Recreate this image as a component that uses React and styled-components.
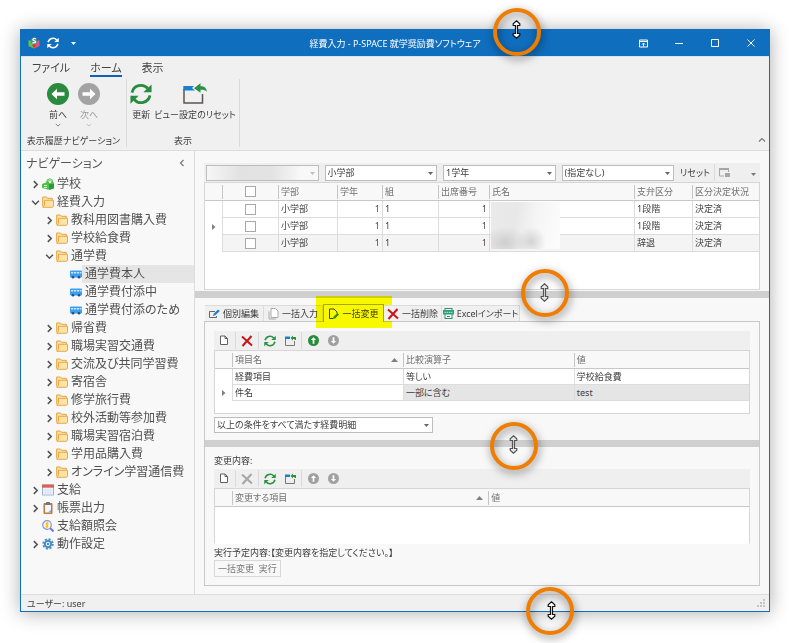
import React from 'react';
import styled, { createGlobalStyle } from 'styled-components';

const GlobalStyle = createGlobalStyle`
  *, *::before, *::after {
    box-sizing: border-box;
  }

  body {
    margin: 0;
    background: #fff;
    color: #3c3c3c;
    font-family: "Noto Sans", "Noto Sans CJK JP", sans-serif;
    font-feature-settings: "palt";
    font-size: 9px;
    line-height: 13px;
  }

  button, select, input {
    font: inherit;
    font-feature-settings: inherit;
    color: inherit;
    margin: 0;
    padding: 0;
    border: 0;
    background: none;
  }
`;

const Window = styled.div`
  position: relative;
  min-width: 740px;
  margin: 29px 19px 32px 20px;
  border: 1px solid #0f6fbe;
  background: #f8f8f8;
  box-shadow: 0 1px 18px rgba(0, 0, 0, 0.32);
`;

const TitleBar = styled.header`
  display: grid;
  grid-template-columns: 1fr auto 1fr;
  align-items: center;
  height: 26px;
  background: #106ebe;
  color: #fff;
`;

const TitleText = styled.h1`
  margin: 0;
  font-size: 9px;
  font-weight: 400;
`;

const QuickAccess = styled.div`
  display: flex;
  align-items: center;
  gap: 7px;
  padding-left: 7px;

  svg {
    display: block;
  }

  svg:last-child {
    margin-left: 5px;
  }
`;

const WindowButtons = styled.div`
  display: flex;
  justify-content: flex-end;
`;

const WindowButton = styled.button`
  display: flex;
  align-items: center;
  justify-content: center;
  width: 36px;
  height: 26px;
`;

const Ribbon = styled.section`
  position: relative;
  background: #f0f0f0;
  border-top: 1px solid #d5e3f3;
  border-bottom: 1px solid #dcdcdc;
`;

const RibbonTabs = styled.div`
  display: flex;
  gap: 20px;
  padding: 2px 0 0 11px;
`;

const RibbonTab = styled.button`
  height: 18px;
  font-size: 11px;
  line-height: 15px;
  color: #444;
  border-bottom: 2px solid ${props => (props.$active ? '#0f63b5' : 'transparent')};
`;

const RibbonGroups = styled.div`
  display: flex;
  padding: 2px 0 3px;
`;

const RibbonGroup = styled.div`
  display: flex;
  flex-direction: column;
  justify-content: space-between;
  align-items: center;
  min-width: ${props => props.$width}px;
  height: 68px;
  border-right: 1px solid #dadada;
`;

const RibbonItems = styled.div`
  display: flex;
  gap: ${props => props.$gap}px;
`;

const RibbonButton = styled.button`
  display: flex;
  flex-direction: column;
  align-items: center;
  min-width: 22px;
  padding-top: 4px;
  color: ${props => (props.disabled ? '#9a9a9a' : '#3c3c3c')};

  span {
    margin-top: 3px;
  }

  svg + span + svg {
    margin-top: 1px;
  }
`;

const CollapseButton = styled.button`
  position: absolute;
  right: 2px;
  bottom: 2px;
  display: flex;
  padding: 4px 1px;
`;

const Body = styled.div`
  display: flex;
`;

const Navigation = styled.nav`
  flex: 0 0 174px;
  border-right: 1px solid #dcdcdc;
`;

const NavHeader = styled.div`
  display: flex;
  align-items: center;
  justify-content: space-between;
  height: 24px;
  padding: 0 8px 0 5px;

  h2 {
    margin: 0;
    font-size: 12px;
    font-weight: 400;
    color: #555;
  }

  button {
    display: flex;
  }
`;

const Tree = styled.ul`
  margin: 0;
  padding: 0;
  list-style: none;
`;

const TreeRow = styled.li`
  display: flex;
  align-items: center;
  height: 18px;
  padding-left: ${props => 7 + props.$level * 14}px;

  > svg {
    flex: none;
  }
`;

const TreeToggle = styled.button`
  display: flex;
  align-items: center;
  justify-content: center;
  flex: none;
  width: 14px;
  height: 18px;
`;

const TreeSpacer = styled.span`
  flex: none;
  width: 14px;
`;

const TreeLink = styled.a`
  flex: 1;
  padding-left: 3px;
  font-size: 12px;
  line-height: 18px;
  white-space: nowrap;
  text-decoration: none;
  color: #505050;
  background: ${props => (props.$selected ? '#e5e5e5' : 'transparent')};
`;

const Content = styled.main`
  flex: 1;
  min-width: 0;
  padding: 12px 0 8px;
`;

const Inset = styled.div`
  padding: 0 9px;
`;

const Splitter = styled.div`
  position: relative;
  height: 7px;
  margin: ${props => props.$top}px 0 7px;
  background: #cfcfcf;
`;

const FilterBar = styled.div`
  display: flex;
  align-items: center;
  gap: 6px;
  height: 19px;
  padding-left: 2px;
  background: #efefef;
`;

const SelectBox = styled.div`
  position: relative;
  display: flex;
  flex: ${props => (props.$width ? 'none' : '1 1 0')};
  width: ${props => (props.$width ? `${props.$width}px` : 'auto')};
  min-width: 0;

  select {
    appearance: none;
    width: 100%;
    height: 16px;
    padding: 0 12px 0 2px;
    line-height: 14px;
    border: 1px solid #bdbdbd;
    background: #fff;
    color: #3c3c3c;
    opacity: 1;
  }

  select:disabled {
    background: linear-gradient(90deg, #f6f6f6, #e2e2e2 30%, #e4e4e4 60%, #f8f8f8 85%);
  }

  svg {
    position: absolute;
    top: 7px;
    right: 4px;
    pointer-events: none;
  }
`;

const FilterActions = styled.div`
  display: flex;
  align-items: center;
  flex: none;
  width: 80px;
  height: 19px;
  white-space: nowrap;

  > button:last-child {
    margin-left: auto;
    padding-right: 4px;
  }
`;

const Separator = styled.span`
  flex: none;
  width: 1px;
  height: 17px;
  margin: 0 ${props => props.$space || 1}px;
  background: #dadada;
`;

const GridFrame = styled.div`
  min-height: ${props => props.$height}px;
  border: 1px solid #d6d6d6;
  border-bottom-color: ${props => (props.$open ? 'transparent' : '#d6d6d6')};
  background: #fff;
`;

const Grid = styled.table`
  width: 100%;
  table-layout: fixed;
  border-collapse: separate;
  border-spacing: 0;

  th {
    height: 18px;
    padding: 0 3px;
    text-align: left;
    font-weight: 400;
    color: #707070;
    background: linear-gradient(#c4c4c4, #c4c4c4) left 2px / 1px 14px no-repeat #f8f8f8;
    border-bottom: 1px solid #c8c8c8;
    white-space: nowrap;
  }

  th:first-child {
    background: #f8f8f8;
  }

  td {
    position: relative;
    height: ${props => props.$rowHeight}px;
    padding: 0 2px;
    line-height: 12px;
    border-left: 1px solid #dcdcdc;
    border-bottom: 1px solid #dcdcdc;
    white-space: nowrap;
  }

  td:first-child {
    padding: 0;
    text-align: center;
    border: 0;
    background: #fff;
  }

  td:first-child svg {
    display: block;
    margin: 0 auto;
  }
`;

const Row = styled.tr`
  background: ${props => (props.$shaded ? '#f4f4f4' : '#fff')};
`;

const CheckCell = styled.td`
  && {
    text-align: center;
  }
`;

const NumberCell = styled.td`
  text-align: right;
  color: #5c3f50;
`;

const FocusedCell = styled.td`
  background: #e5e5e5;
`;

const CheckBox = styled.input`
  appearance: none;
  display: block;
  width: 11px;
  height: 11px;
  margin: 0 auto;
  border: 1px solid #a8a8a8;
  background: #fff;
`;

const SortHeader = styled.div`
  display: flex;
  align-items: center;
  justify-content: space-between;
  padding-right: 2px;
`;

const MaskedNames = styled.span`
  position: absolute;
  z-index: 1;
  top: 1px;
  left: 1px;
  width: 69px;
  height: 47px;
  background:
    radial-gradient(ellipse at 20% 86%, #cfcfcf, transparent 28%),
    radial-gradient(ellipse at 58% 84%, #d3d3d3, transparent 26%),
    linear-gradient(100deg, #eaeaea, #e8e8e8 35%, #f4f4f4 60%, #fdfdfd);
`;

const Tabs = styled.div`
  display: flex;
  align-items: flex-end;
  height: 16px;
  padding-left: 1px;
`;

const Tab = styled.button`
  position: relative;
  display: flex;
  align-items: center;
  justify-content: center;
  gap: 3px;
  flex: none;
  min-width: ${props => props.$width}px;
  height: ${props => (props.$active ? 18 : 16)}px;
  margin-bottom: ${props => (props.$active ? -1 : 0)}px;
  border: 1px solid ${props => (props.$active ? '#a8a8a8' : '#dcdcdc')};
  border-left-width: ${props => (props.$active ? 1 : 0)}px;
  border-bottom: 0;
  background: ${props => (props.$active ? '#f8f8f8' : '#f0f0f0')};
  white-space: nowrap;
`;

const Marker = styled.span`
  position: absolute;
  top: -9px;
  right: -9px;
  bottom: -6px;
  left: -8px;
  background: #ff0;
  mix-blend-mode: multiply;
  pointer-events: none;
`;

const TabPage = styled.section`
  padding: 9px 0 8px;
  border: 1px solid #c8c8c8;
`;

const ToolBar = styled.div`
  display: flex;
  align-items: center;
  height: 19px;
  background: #efefef;
`;

const ToolButton = styled.button`
  display: flex;
  align-items: center;
  justify-content: center;
  width: 20px;
  height: 19px;
`;

const ConditionMode = styled.div`
  padding-top: 3px;
`;

const SectionLabel = styled.p`
  margin: 0 0 2px;
`;

const Summary = styled.p`
  margin: 2px 0 1px;
`;

const RunButton = styled.button`
  height: 17px;
  padding: 0 3px;
  border: 1px solid #d8d8d8;
  color: #777;
  white-space: pre;
`;

const StatusBar = styled.footer`
  display: flex;
  align-items: center;
  justify-content: space-between;
  height: 17px;
  padding: 0 3px 0 6px;
  border-top: 1px solid #dcdcdc;
  background: #f0f0f0;
`;

const Callout = styled.span`
  position: absolute;
  z-index: 5;
  left: ${props => props.$left}px;
  top: ${props => props.$top}px;
  width: 48px;
  height: 48px;
  border: 4px solid #ef7d00;
  border-radius: 50%;
  filter: drop-shadow(1px 3px 4px rgba(0, 0, 0, 0.5));
`;

const CalloutCursor = styled.svg`
  position: absolute;
  z-index: 6;
  left: ${props => props.$left}px;
  top: ${props => props.$top}px;
`;

const ResizeMark = ({ left, top, dx = 0, dy = 0, soft }) => (
  <>
    <Callout $left={left} $top={top} />
    <CalloutCursor $left={left + 19 + dx} $top={top + 14 + dy} width="9" height="19" viewBox="0 0 9 19" aria-hidden="true">
      <path
        d="M4.500.8 L7.800 3.800 V5.500 H5.500 V13.500 H7.800 V15.200 L4.500 18.200 L1.200 15.200 V13.500 H3.500 V5.500 H1.200 V3.800 Z"
        fill={soft ? '#e8e8e8' : '#fff'}
        stroke={soft ? '#555' : '#111'}
        strokeWidth="1.200"
      />
    </CalloutCursor>
  </>
);

const RefreshIcon = ({ size = 12, color = '#2a9142' }) => {
  const half = (
    <>
      <path d="M2.200 10.500 A10 10 0 0 1 19.500 6" fill="none" stroke={color} strokeWidth="3" />
      <path d="M23.500 1.500 V10 H14.500 Z" fill={color} />
    </>
  );
  return (
    <svg width={size} height={size} viewBox="0 0 24 24" aria-hidden="true">
      {half}
      <g transform="rotate(180 12 12)">{half}</g>
    </svg>
  );
};

const ResetViewIcon = () => (
  <svg width="24" height="22" viewBox="0 0 24 22" aria-hidden="true">
    <path d="M1 6 V20 H19.500 V11" fill="none" stroke="#595653" strokeWidth="1.500" />
    <path d="M.3 3 H11 L9 5 L12 7.500 H.3 Z" fill="#1b7fd0" />
    <path d="M11 5.200 L17.500.3 V3.300 C21.500 3.300 23.600 5 23.800 9 C22.300 7 20.500 6.700 17.500 6.800 V9.800 Z" fill="#2a9142" />
  </svg>
);

const SmallResetViewIcon = () => (
  <svg width="13" height="12" viewBox="0 0 13 12" aria-hidden="true">
    <path d="M1.500 4 V10.500 H10.500 V6" fill="none" stroke="#777" />
    <path d="M1 1.500 H6 V4 H1 Z" fill="#1b7fd0" />
    <path d="M6.500 3 L9 .5 V2 H12 V5 H10.500 V4 H9 V5.500 Z" fill="#2a9142" />
  </svg>
);

const CircleArrow = ({ size, color, angle = 0 }) => (
  <svg width={size} height={size} viewBox="0 0 22 22" aria-hidden="true">
    <circle cx="11" cy="11" r="11" fill={color} />
    <path
      transform={`rotate(${angle} 11 11)`}
      d="M4.500 11 L10 5.800 V9.300 H17.500 V12.700 H10 V16.200 Z"
      fill="#fff"
    />
  </svg>
);

const Caret = ({ angle = 0, width = 8, color = '#777', weight = 1.2 }) => (
  <svg width={width} height={width} viewBox="0 0 8 8" aria-hidden="true">
    <path transform={`rotate(${angle} 4 4)`} d="M1 2.500 L4 5.500 L7 2.500" fill="none" stroke={color} strokeWidth={weight} />
  </svg>
);

const DropArrow = ({ color = '#777' }) => (
  <svg width="5" height="3" viewBox="0 0 5 3" aria-hidden="true">
    <path d="M0 0 H5 L2.500 3 Z" fill={color} />
  </svg>
);

const SortArrow = () => (
  <svg width="7" height="4" viewBox="0 0 7 4" aria-hidden="true">
    <path d="M0 4 H7 L3.500 0 Z" fill="#808080" />
  </svg>
);

const RowPointer = () => (
  <svg width="4" height="6" viewBox="0 0 4 6" aria-hidden="true">
    <path d="M0 0 L3.500 3 L0 6 Z" fill="#808080" />
  </svg>
);

const DocIcon = () => (
  <svg width="9" height="11" viewBox="0 0 9 11" aria-hidden="true">
    <path d="M.5 1 H5 L7.500 3.500 V9.500 H.5 Z M5 1 V3.500 H7.500" fill="#fff" stroke="#606060" />
  </svg>
);

const CrossIcon = ({ color = '#c8151c' }) => (
  <svg width="12" height="12" viewBox="0 0 12 12" aria-hidden="true">
    <path d="M1 1.500 L11 10.500 M10.500 1 L1.500 11" stroke={color} strokeWidth="2" />
  </svg>
);

const AppIcon = () => (
  <svg width="12" height="12" viewBox="0 0 12 12" aria-hidden="true">
    <path d="M.5 3 L6 5 V11.500 L.5 9 Z" fill="#6bc04b" />
    <path d="M11.500 3 L6 5 V11.500 L11.500 9 Z" fill="#e0567c" />
    <path d="M6 0 L9 2 V6 L6 8 L3 6 V2 Z" fill="#4d8f86" />
    <path d="M8 1.800 C5.500.8 4 2.500 5.500 3.500 C8.500 4 8.500 6.500 4.300 5.800" fill="none" stroke="#fff" strokeWidth="1.200" />
    <path d="M4 8 L6 7 L8 8 L6 11 Z" fill="#c63b30" />
  </svg>
);

const FolderIcon = () => (
  <svg width="12" height="12" viewBox="0 0 12 12" aria-hidden="true">
    <path d="M.7 10.500 V1 H4.500 L5.500 2.300 H10.300 V4" fill="#fbe0a8" stroke="#e8a33d" />
    <path d="M2.500 4.300 H11.500 V10 L10.500 11.300 H.8 L2.500 9.500 Z" fill="#fde3a6" stroke="#eaa845" />
  </svg>
);

const SchoolIcon = () => (
  <svg width="12" height="12" viewBox="0 0 12 12" aria-hidden="true">
    <path d="M0 6 L4 4.500 L5 1.500 L8 .3 L11 2 V4 L12 5 V10 L8 12 L0 10 Z" fill="#4fc04a" />
    <path d="M5 2.500 L8 .8 L11 2.500 L8 5 Z" fill="#8be07d" />
    <path d="M7 6 H12 V10.500 L7 11.500 Z" fill="#2c9a39" />
    <path d="M2 7.500 H5 M2 9.500 H5" stroke="#d9f7c8" />
    <circle cx="8" cy="4" r="1.200" fill="#fff" />
  </svg>
);

const BusIcon = () => (
  <svg width="12" height="12" viewBox="0 0 12 12" aria-hidden="true">
    <rect x="0" y="2.500" width="12" height="7" rx="1" fill="#3d9dee" />
    <path d="M1 4 H3.300 V5.500 H1 Z M4 4 H6.300 V5.500 H4 Z M7 4 H9.300 V5.500 H7 Z M10 4 H11.500 V5.500 H10 Z" fill="#c4e6ff" />
    <circle cx="3" cy="9.300" r="1.300" fill="#234f7d" />
    <circle cx="9" cy="9.300" r="1.300" fill="#234f7d" />
  </svg>
);

const CalendarIcon = () => (
  <svg width="12" height="12" viewBox="0 0 12 12" aria-hidden="true">
    <rect x=".5" y="1" width="11" height="10" fill="#f4f7fc" stroke="#a3b2d4" />
    <rect x="0" y=".5" width="12" height="3.200" fill="#d5625a" />
    <path d="M1 6.200 H11 M1 8.600 H11 M3.500 4 V11 M6 4 V11 M8.500 4 V11" stroke="#d0daec" strokeWidth=".6" />
  </svg>
);

const ClipboardIcon = () => (
  <svg width="12" height="12" viewBox="0 0 12 12" aria-hidden="true">
    <rect x="1.500" y="1" width="9" height="11" rx="1" fill="#b97c3f" />
    <rect x="3" y="3" width="6" height="7.500" fill="#f2f5fa" />
    <rect x="4" y="0" width="4" height="3" fill="#687894" />
    <path d="M6 10.500 L9 7.500 V10.500 Z" fill="#98a9c8" />
  </svg>
);

const SearchMoneyIcon = () => (
  <svg width="12" height="12" viewBox="0 0 12 12" aria-hidden="true">
    <path d="M8 8 L11.500 11.500" stroke="#6f77e8" strokeWidth="2" />
    <circle cx="5" cy="5" r="4.300" fill="#fff5c8" stroke="#8a90f5" strokeWidth="1.200" />
    <path d="M6.500 3.300 C4.500 2.500 3.200 4.400 5 5 C7 5.500 6 7.500 3.500 6.700 M5 2 V8" fill="none" stroke="#f2b40c" />
  </svg>
);

const GearIcon = () => (
  <svg width="12" height="12" viewBox="0 0 12 12" aria-hidden="true">
    <circle cx="6" cy="6" r="4.800" fill="none" stroke="#4a8fc2" strokeWidth="1.800" strokeDasharray="2 1.770" />
    <circle cx="6" cy="6" r="3.200" fill="#d8ebf8" stroke="#4a8fc2" strokeWidth="2" />
    <circle cx="6" cy="6" r="1" fill="#2f6fa3" />
  </svg>
);

const EditIcon = () => (
  <svg width="11" height="10" viewBox="0 0 11 10" aria-hidden="true">
    <path d="M6 2.500 H.5 V8.500 H7.500 V7" fill="none" stroke="#666" />
    <path d="M4 7 L4.700 4.800 L9 .5 L10.800 2 L6.300 6.300 Z" fill="#1b7fd0" />
  </svg>
);

const PagesIcon = () => (
  <svg width="11" height="12" viewBox="0 0 11 12" aria-hidden="true">
    <path d="M3 2.500 V10 H10" fill="none" stroke="#aaa" transform="translate(-2 1)" />
    <path d="M3 .5 H7.500 L10 3 V9.500 H3 Z" fill="#fff" stroke="#aaa" />
  </svg>
);

const EditPageIcon = () => (
  <svg width="11" height="12" viewBox="0 0 11 12" aria-hidden="true">
    <path d="M5 10.500 H1.500 V1 H6 L9 4 V5.500" fill="none" stroke="#444" />
    <path d="M5 11 L5.500 8.800 L9.500 5 L11 6.500 L7 10.500 Z" fill="#2a9142" />
  </svg>
);

const ExcelIcon = () => (
  <svg width="11" height="11" viewBox="0 0 11 11" aria-hidden="true">
    <rect x="2" y=".5" width="7" height="10" fill="#fff" stroke="#2f8f69" />
    <rect x="0" y="2" width="11" height="4.500" fill="#2f9d76" />
    <path d="M1.500 4.300 H9.500" stroke="#c9eadd" strokeDasharray="1.500 .7" />
    <path d="M4 8.500 H7" stroke="#2f8f69" />
  </svg>
);

const ViewMenuIcon = () => (
  <svg width="11" height="11" viewBox="0 0 11 11" aria-hidden="true">
    <path d="M.5 2 V9 H5 M9.500 2 V5" fill="none" stroke="#a6a6a6" />
    <rect x="0" y="1" width="10" height="2" fill="#a6a6a6" />
    <rect x="6" y="6" width="5" height="4" fill="#a6a6a6" />
  </svg>
);

const SizeGrip = () => (
  <svg width="9" height="9" viewBox="0 0 9 9" aria-hidden="true">
    <path d="M6 0 H8 V2 H6 Z M3 3 H5 V5 H3 Z M6 3 H8 V5 H6 Z M0 6 H2 V8 H0 Z M3 6 H5 V8 H3 Z M6 6 H8 V8 H6 Z" fill="#c4c4c4" />
  </svg>
);

const treeItems = [
  { level: 0, label: '学校', icon: SchoolIcon },
  { level: 0, label: '経費入力', icon: FolderIcon, open: true },
  { level: 1, label: '教科用図書購入費', icon: FolderIcon },
  { level: 1, label: '学校給食費', icon: FolderIcon },
  { level: 1, label: '通学費', icon: FolderIcon, open: true },
  { level: 2, label: '通学費本人', icon: BusIcon, leaf: true, selected: true },
  { level: 2, label: '通学費付添中', icon: BusIcon, leaf: true },
  { level: 2, label: '通学費付添のため', icon: BusIcon, leaf: true },
  { level: 1, label: '帰省費', icon: FolderIcon },
  { level: 1, label: '職場実習交通費', icon: FolderIcon },
  { level: 1, label: '交流及び共同学習費', icon: FolderIcon },
  { level: 1, label: '寄宿舎', icon: FolderIcon },
  { level: 1, label: '修学旅行費', icon: FolderIcon },
  { level: 1, label: '校外活動等参加費', icon: FolderIcon },
  { level: 1, label: '職場実習宿泊費', icon: FolderIcon },
  { level: 1, label: '学用品購入費', icon: FolderIcon },
  { level: 1, label: 'オンライン学習通信費', icon: FolderIcon },
  { level: 0, label: '支給', icon: CalendarIcon },
  { level: 0, label: '帳票出力', icon: ClipboardIcon },
  { level: 0, label: '支給額照会', icon: SearchMoneyIcon, leaf: true },
  { level: 0, label: '動作設定', icon: GearIcon }
];

const students = [
  { support: '1段階', status: '決定済' },
  { support: '1段階', status: '決定済', current: true },
  { support: '辞退', status: '決定済', shaded: true }
];

const Dropdown = ({ label, value, width, disabled }) => (
  <SelectBox $width={width}>
    <select aria-label={label} disabled={disabled} defaultValue={value}>
      <option value={value}>{value}</option>
    </select>
    <DropArrow color={disabled ? '#c0c0c0' : '#666'} />
  </SelectBox>
);

const EditTools = ({ enabled }) => (
  <ToolBar>
    <ToolButton aria-label="新規"><DocIcon /></ToolButton>
    <Separator />
    <ToolButton aria-label="削除"><CrossIcon color={enabled ? '#c8151c' : '#a6a6a6'} /></ToolButton>
    <Separator />
    <ToolButton aria-label="更新"><RefreshIcon /></ToolButton>
    <ToolButton aria-label="ビュー設定のリセット"><SmallResetViewIcon /></ToolButton>
    <Separator />
    <ToolButton aria-label="上へ"><CircleArrow size={11} angle={90} color={enabled ? '#2a8b3f' : '#a0a0a0'} /></ToolButton>
    <ToolButton aria-label="下へ"><CircleArrow size={11} angle={270} color="#a0a0a0" /></ToolButton>
  </ToolBar>
);

const NavigationPane = () => (
  <Navigation>
    <NavHeader>
      <h2>ナビゲーション</h2>
      <button aria-label="折りたたむ"><Caret angle={90} /></button>
    </NavHeader>
    <Tree>
      {treeItems.map(({ level, label, icon: Icon, open, leaf, selected }) => (
        <TreeRow key={label} $level={level}>
          {leaf ? <TreeSpacer /> : (
            <TreeToggle aria-label={label} aria-expanded={!!open}>
              <Caret angle={open ? 0 : 270} width={9} color="#555" weight={1.4} />
            </TreeToggle>
          )}
          <Icon />
          <TreeLink href="#" $selected={selected}>{label}</TreeLink>
        </TreeRow>
      ))}
    </Tree>
  </Navigation>
);

const StudentGrid = () => (
  <GridFrame $height={108}>
    <Grid $rowHeight={17}>
      <colgroup>
        <col width="17" />
        <col width="56" />
        <col width="59" />
        <col width="45" />
        <col width="56" />
        <col width="51" />
        <col />
        <col width="58" />
        <col width="67" />
      </colgroup>
      <thead>
        <tr>
          <th />
          <th><CheckBox type="checkbox" aria-label="すべて選択" /></th>
          <th>学部</th>
          <th>学年</th>
          <th>組</th>
          <th>出席番号</th>
          <th>氏名</th>
          <th>支弁区分</th>
          <th>区分決定状況</th>
        </tr>
      </thead>
      <tbody>
        {students.map((student, index) => (
          <Row key={index} $shaded={student.shaded}>
            <td>{student.current && <RowPointer />}</td>
            <CheckCell><CheckBox type="checkbox" aria-label={`${index + 1}行目`} /></CheckCell>
            <td>小学部</td>
            <NumberCell>1</NumberCell>
            <td>1</td>
            <NumberCell>1</NumberCell>
            <td>{index === 0 && <MaskedNames />}</td>
            <td>{student.support}</td>
            <td>{student.status}</td>
          </Row>
        ))}
      </tbody>
    </Grid>
  </GridFrame>
);

const ConditionGrid = () => (
  <GridFrame $height={64}>
    <Grid $rowHeight={16}>
      <colgroup>
        <col width="17" />
        <col width="32%" />
        <col width="32%" />
        <col />
      </colgroup>
      <thead>
        <tr>
          <th />
          <th><SortHeader>項目名<SortArrow /></SortHeader></th>
          <th>比較演算子</th>
          <th>値</th>
        </tr>
      </thead>
      <tbody>
        <Row>
          <td />
          <td>経費項目</td>
          <td>等しい</td>
          <td>学校給食費</td>
        </Row>
        <Row>
          <td><RowPointer /></td>
          <td>件名</td>
          <FocusedCell>一部に含む</FocusedCell>
          <FocusedCell>test</FocusedCell>
        </Row>
      </tbody>
    </Grid>
  </GridFrame>
);

const ChangeGrid = () => (
  <GridFrame $height={56} $open>
    <Grid $rowHeight={16}>
      <colgroup>
        <col width="17" />
        <col width="48%" />
        <col />
      </colgroup>
      <thead>
        <tr>
          <th />
          <th><SortHeader>変更する項目<SortArrow /></SortHeader></th>
          <th>値</th>
        </tr>
      </thead>
    </Grid>
  </GridFrame>
);

const App = () => (
  <>
    <GlobalStyle />
    <Window>
      <TitleBar>
        <QuickAccess>
          <AppIcon />
          <RefreshIcon size={12} color="#fff" />
          <DropArrow color="#fff" />
        </QuickAccess>
        <TitleText>経費入力 - P-SPACE 就学奨励費ソフトウェア</TitleText>
        <WindowButtons>
          <WindowButton aria-label="リボンの表示">
            <svg width="9" height="9" viewBox="0 0 9 9"><path d="M.5 1 H8.500 V8 H.5 Z M.5 2.500 H8.500 M4.500 7.500 V4 M3 5.500 L4.500 4 L6 5.500" fill="none" stroke="#fff" /></svg>
          </WindowButton>
          <WindowButton aria-label="最小化">
            <svg width="8" height="8" viewBox="0 0 8 8"><path d="M0 4.500 H8" stroke="#fff" /></svg>
          </WindowButton>
          <WindowButton aria-label="最大化">
            <svg width="8" height="8" viewBox="0 0 8 8"><path d="M.5.5 H7.500 V7.500 H.5 Z" fill="none" stroke="#fff" /></svg>
          </WindowButton>
          <WindowButton aria-label="閉じる">
            <svg width="8" height="8" viewBox="0 0 8 8"><path d="M.5.5 L7.500 7.500 M7.500.5 L.5 7.500" stroke="#fff" /></svg>
          </WindowButton>
        </WindowButtons>
      </TitleBar>

      <Ribbon>
        <RibbonTabs>
          <RibbonTab>ファイル</RibbonTab>
          <RibbonTab $active>ホーム</RibbonTab>
          <RibbonTab>表示</RibbonTab>
        </RibbonTabs>
        <RibbonGroups>
          <RibbonGroup $width={106}>
            <RibbonItems $gap={9}>
              <RibbonButton>
                <CircleArrow size={22} color="#2a8b3f" />
                <span>前へ</span>
                <Caret width={6} />
              </RibbonButton>
              <RibbonButton disabled>
                <CircleArrow size={22} color="#a3a3a3" angle={180} />
                <span>次へ</span>
                <Caret width={6} color="#b8b8b8" />
              </RibbonButton>
            </RibbonItems>
            <div>表示履歴ナビゲーション</div>
          </RibbonGroup>
          <RibbonGroup $width={113}>
            <RibbonItems $gap={2}>
              <RibbonButton>
                <RefreshIcon size={22} color="#2a8b3f" />
                <span>更新</span>
              </RibbonButton>
              <RibbonButton>
                <ResetViewIcon />
                <span>ビュー設定のリセット</span>
              </RibbonButton>
            </RibbonItems>
            <div>表示</div>
          </RibbonGroup>
        </RibbonGroups>
        <CollapseButton aria-label="リボンを折りたたむ"><Caret angle={180} /></CollapseButton>
      </Ribbon>

      <Body>
        <NavigationPane />
        <Content>
          <Inset>
            <FilterBar>
              <Dropdown label="学校" value="" disabled />
              <Dropdown label="学部" value="小学部" />
              <Dropdown label="学年" value="1学年" />
              <Dropdown label="組" value="(指定なし)" />
              <FilterActions>
                <button>リセット</button>
                <Separator $space={4} />
                <ViewMenuIcon />
                <button aria-label="表示メニュー"><DropArrow /></button>
              </FilterActions>
            </FilterBar>
            <StudentGrid />
          </Inset>
          <Splitter $top={1}>
            <ResizeMark left={326} top={-22} soft />
          </Splitter>
          <Inset>
            <Tabs role="tablist">
              <Tab role="tab" $width={59}><EditIcon />個別編集</Tab>
              <Tab role="tab" $width={59}><PagesIcon />一括入力</Tab>
              <Tab role="tab" aria-selected="true" $width={61} $active>
                <EditPageIcon />一括変更
                <Marker />
              </Tab>
              <Tab role="tab" $width={58}><CrossIcon />一括削除</Tab>
              <Tab role="tab" $width={78}><ExcelIcon />Excelインポート</Tab>
            </Tabs>
            <TabPage>
              <Inset>
                <EditTools enabled />
                <ConditionGrid />
                <ConditionMode>
                  <Dropdown label="条件の組み合わせ" value="以上の条件をすべて満たす経費明細" width={219} />
                </ConditionMode>
              </Inset>
              <Splitter $top={7}>
                <ResizeMark left={285} top={-18} dy={-1} soft />
              </Splitter>
              <Inset>
                <SectionLabel>変更内容:</SectionLabel>
                <EditTools />
                <ChangeGrid />
                <Summary>実行予定内容:【変更内容を指定してください。】</Summary>
                <RunButton>一括変更  実行</RunButton>
              </Inset>
            </TabPage>
          </Inset>
        </Content>
      </Body>

      <StatusBar>
        <span>ユーザー: user</span>
        <SizeGrip />
      </StatusBar>
      <ResizeMark left={472} top={-22} dy={-2} />
      <ResizeMark left={505} top={557} dx={2} />
    </Window>
  </>
);

export default App;
